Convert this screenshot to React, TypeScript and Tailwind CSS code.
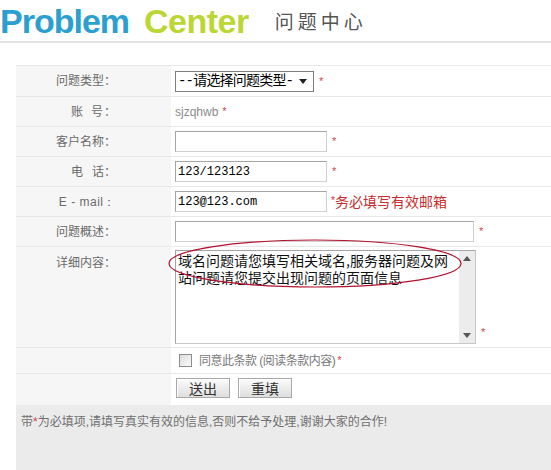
const cjk = "font-['Liberation_Sans','Noto_Sans_CJK_SC',sans-serif]";

function Star({ className = "" }: { className?: string }) {
  return <span className={"text-[11px] leading-none text-[#d04848] " + className}>*</span>;
}

function Row({
  label,
  children,
  rowClass,
  labelClass = "items-center",
}: {
  label: React.ReactNode;
  children: React.ReactNode;
  rowClass: string;
  labelClass?: string;
}) {
  return (
    <div className={"grid grid-cols-[156px_1fr] border-b border-[#e8e8e8] " + rowClass}>
      <div className={"flex justify-end pr-[55px] bg-[#f6f6f6] border-r border-white text-[12px] text-[#6a6a6a] " + labelClass}>
        {label}
      </div>
      <div className="flex items-center pl-[3px]">{children}</div>
    </div>
  );
}

function TextInput({ value = "", width }: { value?: string; width: string }) {
  return (
    <input
      readOnly
      value={value}
      className={
        "h-[21px] px-[2px] border border-[#a5a5a5] border-r-[#d0d0d0] border-b-[#d0d0d0] bg-white text-[12px] text-black outline-none font-['Liberation_Mono','Noto_Sans_CJK_SC',monospace] " +
        width
      }
    />
  );
}

export default function App() {
  return (
    <div className={"w-[551px] h-[470px] overflow-hidden bg-white " + cjk}>
      <header className="h-[43px] border-b-2 border-[#e3e3e3] flex items-start pt-[4px]">
        <div className="text-[34px] leading-[34px] font-bold tracking-[-1px] font-['Liberation_Sans',sans-serif]">
          <span className="text-[#2b9fcf]">Problem</span>
          <span className="text-[#bcd636] ml-[15px] tracking-[-0.5px]">Center</span>
        </div>
        <div className="ml-[26px] mt-[6px] text-[19px] leading-[22px] tracking-[4px] text-[#555] font-['Noto_Sans_CJK_SC',sans-serif]">
          问题中心
        </div>
      </header>

      <div className="ml-[16px] mt-[22px] border-t border-[#e8e8e8]">
        <Row label="问题类型：" rowClass="h-[31px]">
          <div className="w-[139px] h-[21px] border border-[#7d7d7d] bg-white flex items-center pl-[2px] text-[14px] leading-none text-black">
            <span className="font-['Liberation_Mono','Noto_Sans_CJK_SC',monospace] tracking-[-0.8px]">--请选择问题类型-</span>
            <svg className="ml-auto mr-[6px]" width="8" height="5" viewBox="0 0 8 5">
              <path d="M0 0h8L4 5z" fill="#222" />
            </svg>
          </div>
          <Star className="ml-[5px]" />
        </Row>
        <Row
          label={
            <span>
              <span className="mr-[8px]">账</span>
              <span className="mr-[1px]">号</span>：
            </span>
          }
          rowClass="h-[30px]"
        >
          <span className="text-[12px] text-[#8a8a8a] font-['Liberation_Sans',sans-serif]">sjzqhwb</span>
          <Star className="ml-[4px]" />
        </Row>
        <Row label="客户名称：" rowClass="h-[30px]">
          <TextInput width="w-[152px]" />
          <Star className="ml-[5px]" />
        </Row>
        <Row
          label={
            <span>
              <span className="mr-[9px]">电</span>话：
            </span>
          }
          rowClass="h-[30px]"
        >
          <TextInput width="w-[152px]" value="123/123123" />
          <Star className="ml-[5px]" />
        </Row>
        <Row label={<span className="font-['Liberation_Sans',sans-serif] tracking-[0.5px]">E - mail：</span>} rowClass="h-[30px]">
          <TextInput width="w-[152px]" value="123@123.com" />
          <span className="ml-[4px] flex items-center text-[14px] text-[#c62f2f]">
            <span className="text-[10px] self-start mt-[2px]">*</span>
            <span className="font-['Noto_Sans_CJK_SC',sans-serif]">务必填写有效邮箱</span>
          </span>
        </Row>
        <Row label="问题概述：" rowClass="h-[30px]">
          <TextInput width="w-[299px]" />
          <Star className="ml-[5px]" />
        </Row>
        <Row label="详细内容：" rowClass="h-[101px]" labelClass="items-start pt-[7px]">
          <div className="relative flex items-end self-start mt-[3px]">
            <div className="w-[301px] h-[94px] flex border border-[#a5a5a5] border-r-[#c8c8c8] border-b-[#c8c8c8] bg-white">
              <textarea
                readOnly
                value={"域名问题请您填写相关域名,服务器问题及网\n站问题请您提交出现问题的页面信息"}
                className="flex-1 resize-none overflow-hidden outline-none px-[2px] pt-[1px] text-[14px] leading-[17px] text-[#111] font-['Noto_Sans_CJK_SC',sans-serif]"
              />
              <div className="w-[16px] bg-[#ececec] flex flex-col items-center justify-between py-[5px]">
                <svg width="8" height="5" viewBox="0 0 8 5">
                  <path d="M4 0l4 5H0z" fill="#555" />
                </svg>
                <svg width="8" height="5" viewBox="0 0 8 5">
                  <path d="M0 0h8L4 5z" fill="#555" />
                </svg>
              </div>
            </div>
            <Star className="ml-[5px] mb-[6px]" />
            <svg
              className="absolute left-[-7px] top-[-11px] pointer-events-none"
              width="296"
              height="50"
              viewBox="0 0 296 50"
            >
              <ellipse cx="147" cy="24.5" rx="146" ry="23.5" fill="none" stroke="#b3122e" strokeWidth="1.2" />
            </svg>
          </div>
        </Row>
        <Row label="" rowClass="h-[26px]">
          <span className="ml-[4px] w-[13px] h-[13px] border border-[#8c8c8c] bg-gradient-to-br from-[#dcdcdc] to-[#fafafa]" />
          <span className="ml-[7px] text-[12px] tracking-[-0.5px] text-[#777]">同意此条款 (阅读条款内容)</span>
          <Star className="ml-[2px]" />
        </Row>
        <div className="grid grid-cols-[156px_1fr] h-[31px]">
          <div className="bg-[#f6f6f6] border-r border-white" />
          <div className="flex items-start pt-[4px] pl-[4px] gap-[8px]">
            {["送出", "重填"].map((t) => (
              <button
                key={t}
                className="w-[54px] h-[20px] border border-[#a8a8a8] bg-gradient-to-b from-[#fbfbfb] to-[#dedede] shadow-[inset_1px_1px_0_#fff] text-[14px] leading-none text-[#333] font-['Noto_Sans_CJK_SC',sans-serif]"
              >
                {t}
              </button>
            ))}
          </div>
        </div>
        <div className="h-[65px] bg-[#ebebeb] px-[5px] pt-[8px] text-[12px] text-[#707070]">
          带<span className="text-[#d04848]">*</span>为必填项,请填写真实有效的信息,否则不给予处理,谢谢大家的合作!
        </div>
      </div>
    </div>
  );
}
